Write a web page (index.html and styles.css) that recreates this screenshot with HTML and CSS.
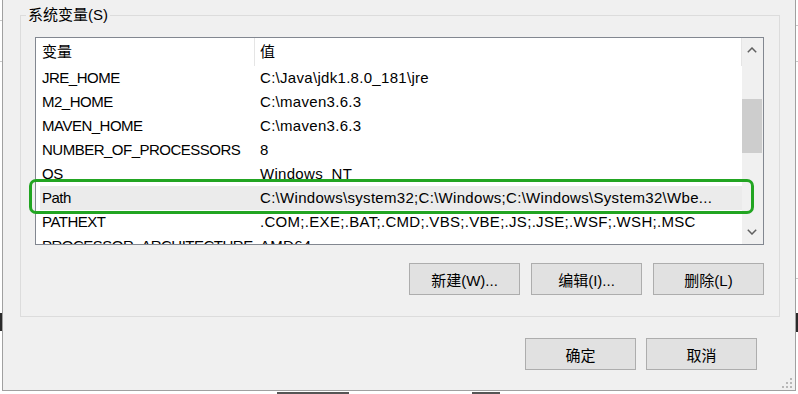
FILE: index.html
```html
<!DOCTYPE html>
<html lang="zh-CN">
<head>
<meta charset="utf-8">
<title>系统变量</title>
<link rel="stylesheet" href="styles.css">
</head>
<body>
<div class="backdrop">
  <span class="mark mark-gray mark-l1"></span>
  <span class="mark mark-gray mark-l2"></span>
  <span class="mark mark-dark mark-l3"></span>
  <span class="mark mark-gray mark-r1"></span>
  <span class="mark mark-gray mark-r2"></span>
  <span class="mark mark-gray mark-r3"></span>
  <span class="mark mark-dark mark-r4"></span>
  <span class="mark mark-dark mark-b1"></span>
  <span class="mark mark-dark mark-b2"></span>
</div>
<div class="dialog">
  <fieldset class="group">
    <legend class="group-title">系统变量(S)</legend>
    <div class="list-wrap">
      <div class="list">
        <div class="list-body">
          <div class="list-head">
            <div class="head-cell head-name">变量</div>
            <div class="head-cell head-value">值</div>
          </div>
          <div class="row"><span class="cell name">JRE_HOME</span><span class="cell value">C:\Java\jdk1.8.0_181\jre</span></div>
          <div class="row"><span class="cell name">M2_HOME</span><span class="cell value">C:\maven3.6.3</span></div>
          <div class="row"><span class="cell name">MAVEN_HOME</span><span class="cell value">C:\maven3.6.3</span></div>
          <div class="row"><span class="cell name">NUMBER_OF_PROCESSORS</span><span class="cell value">8</span></div>
          <div class="row"><span class="cell name">OS</span><span class="cell value">Windows_NT</span></div>
          <div class="row row-selected"><span class="cell name">Path</span><span class="cell value">C:\Windows\system32;C:\Windows;C:\Windows\System32\Wbe...</span></div>
          <div class="row"><span class="cell name">PATHEXT</span><span class="cell value">.COM;.EXE;.BAT;.CMD;.VBS;.VBE;.JS;.JSE;.WSF;.WSH;.MSC</span></div>
          <div class="row"><span class="cell name">PROCESSOR_ARCHITECTURE</span><span class="cell value">AMD64</span></div>
        </div>
        <div class="scrollbar">
          <div class="sb-btn">
            <svg width="10" height="6" viewBox="0 0 10 6"><polyline points="0.8,5.2 5,1 9.2,5.2" fill="none" stroke="#606060" stroke-width="1.5"/></svg>
          </div>
          <div class="sb-track"><div class="sb-thumb"></div></div>
          <div class="sb-btn">
            <svg width="10" height="6" viewBox="0 0 10 6"><polyline points="0.8,0.8 5,5 9.2,0.8" fill="none" stroke="#606060" stroke-width="1.5"/></svg>
          </div>
        </div>
      </div>
      <div class="highlight-ring"></div>
    </div>
    <div class="group-buttons">
      <button class="btn" type="button">新建(W)...</button>
      <button class="btn" type="button">编辑(I)...</button>
      <button class="btn" type="button">删除(L)</button>
    </div>
  </fieldset>
  <div class="dialog-buttons">
    <button class="btn" type="button">确定</button>
    <button class="btn" type="button">取消</button>
  </div>
  <svg class="grip" width="12" height="12" viewBox="0 0 12 12">
    <rect x="9" y="1" width="2" height="2" fill="#b8b8b8"/>
    <rect x="5" y="5" width="2" height="2" fill="#b8b8b8"/>
    <rect x="9" y="5" width="2" height="2" fill="#b8b8b8"/>
    <rect x="1" y="9" width="2" height="2" fill="#b8b8b8"/>
    <rect x="5" y="9" width="2" height="2" fill="#b8b8b8"/>
    <rect x="9" y="9" width="2" height="2" fill="#b8b8b8"/>
  </svg>
</div>
</body>
</html>
```

FILE: styles.css
```css
* {
  box-sizing: border-box;
}

html,
body {
  margin: 0;
  padding: 0;
}

body {
  position: relative;
  width: 798px;
  height: 394px;
  overflow: hidden;
  background: #ffffff;
  color: #000000;
  font-family: "Liberation Sans", "Noto Sans CJK SC", sans-serif;
  font-size: 15px;
}

/* fragments of the window behind the dialog */
.backdrop {
  position: absolute;
  inset: 0;
}

.mark {
  position: absolute;
  display: block;
}

.mark-gray { background: #c8c8c8; }
.mark-dark { background: #2a2a2a; }

.mark-l1 { left: 0; top: 20px; width: 2px; height: 1px; }
.mark-l2 { left: 0; top: 61px; width: 2px; height: 1px; }
.mark-l3 { left: 0; top: 313px; width: 2px; height: 18px; }
.mark-r1 { left: 796px; top: 25px; width: 2px; height: 1px; }
.mark-r2 { left: 796px; top: 61px; width: 2px; height: 1px; }
.mark-r3 { left: 796px; top: 278px; width: 2px; height: 1px; }
.mark-r4 { left: 796px; top: 313px; width: 2px; height: 19px; }
.mark-b1 { left: 277px; top: 392px; width: 72px; height: 2px; background: #555; }
.mark-b2 { left: 472px; top: 392px; width: 28px; height: 2px; background: #555; }

.dialog {
  position: relative;
  margin-left: 2px;
  width: 794px;
  height: 391px;
  background: #f0f0f0;
  border: 1px solid #a0a0a0;
  border-top: 0;
  padding: 5px 15px 0 17px;
}

.group {
  margin: 0;
  min-width: 0;
  width: 760px;
  border: 1px solid #dcdcdc;
  padding: 0 15px 21px 14px;
}

.group-title {
  margin-left: -9px;
  padding: 0 2px;
  line-height: 20px;
  font-size: 15px;
  color: #000;
}

.list-wrap {
  position: relative;
  margin-top: 12px;
}

.list {
  display: flex;
  height: 208px;
  border: 1px solid #828790;
  background: #ffffff;
  overflow: hidden;
}

.list-body {
  flex: 1;
  min-width: 0;
  overflow: hidden;
}

.list-head {
  display: flex;
  height: 28px;
  line-height: 28px;
}

.head-cell {
  border-right: 1px solid #e5e5e5;
}

.head-name {
  width: 219px;
  padding-left: 6px;
}

.head-value {
  flex: 1;
  padding-left: 5px;
}

.row {
  display: flex;
  height: 24px;
  line-height: 24px;
  margin-left: 4px;
  white-space: nowrap;
}

.row-selected {
  background: #ebebeb;
}

.cell {
  display: block;
  overflow: hidden;
}

.name {
  width: 214px;
  flex: none;
  padding-left: 2px;
  letter-spacing: -0.5px;
}

.value {
  flex: 1;
  min-width: 0;
  padding-left: 6px;
  padding-right: 8px;
  letter-spacing: 0.3px;
  text-overflow: ellipsis;
}

.scrollbar {
  display: flex;
  flex-direction: column;
  width: 21px;
  flex: none;
  background: #f0f0f0;
}

.sb-btn {
  display: flex;
  align-items: center;
  justify-content: center;
  height: 24px;
  padding-right: 1px;
}

.sb-track {
  flex: 1;
}

.sb-thumb {
  margin-top: 37px;
  width: 20px;
  height: 54px;
  background: #cdcdcd;
}

.highlight-ring {
  position: absolute;
  left: -6px;
  top: 142px;
  width: 725px;
  height: 35px;
  border: 3px solid #22a522;
  border-radius: 7px;
}

.group-buttons {
  display: flex;
  justify-content: flex-end;
  gap: 11px;
  margin-top: 18px;
}

.btn {
  display: flex;
  align-items: center;
  justify-content: center;
  width: 111px;
  height: 32px;
  margin: 0;
  padding: 0;
  background: #e1e1e1;
  border: 1px solid #adadad;
  border-radius: 0;
  color: #000;
  font-family: "Liberation Sans", "Noto Sans CJK SC", sans-serif;
  font-size: 15px;
}

.dialog-buttons {
  display: flex;
  justify-content: flex-end;
  gap: 10px;
  margin-top: 21px;
  margin-right: 23px;
}

.grip {
  position: absolute;
  right: 2px;
  bottom: 1px;
}
```
